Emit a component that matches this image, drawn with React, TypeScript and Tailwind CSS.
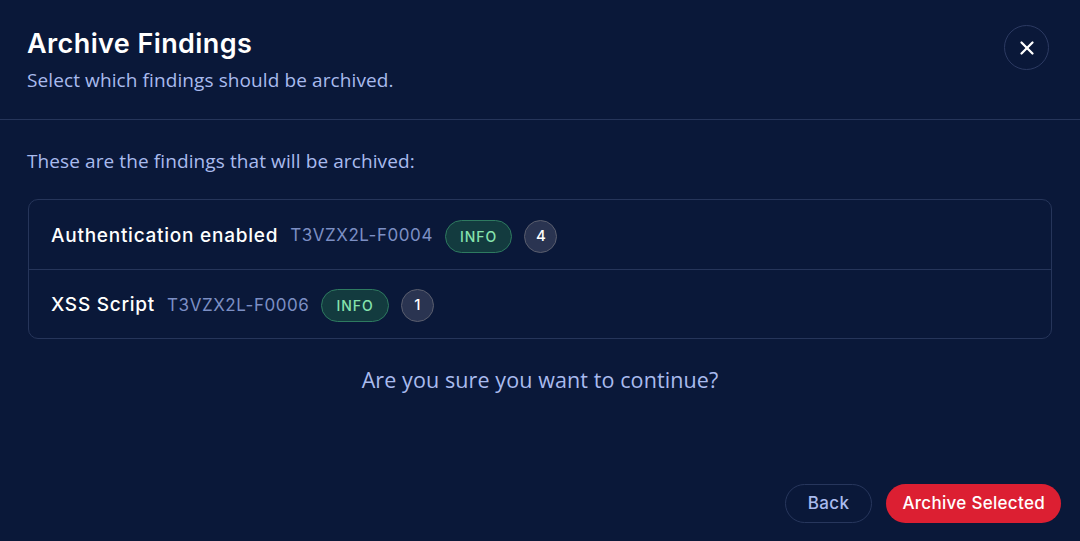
import { X } from 'lucide-react';

interface Finding {
  title: string;
  code: string;
  severity: string;
  count: number;
}

const findings: Finding[] = [
  { title: 'Authentication enabled', code: 'T3VZX2L-F0004', severity: 'INFO', count: 4 },
  { title: 'XSS Script', code: 'T3VZX2L-F0006', severity: 'INFO', count: 1 },
];

export default function App() {
  return (
    <div className="w-[1080px] h-[541px] bg-[#0a1839] flex flex-col font-['Open_Sans','Noto_Sans',sans-serif] overflow-hidden">
      {/* Header */}
      <div className="flex items-start justify-between px-[27px] pt-[26px] pb-[26px] border-b border-[#26355a]">
        <div>
          <h1 className="text-[27px] leading-[36px] font-semibold text-white font-['Inter',sans-serif] tracking-[0.4px]">
            Archive Findings
          </h1>
          <p className="mt-[5px] text-[19px] leading-[26px] text-[#a9bbee] tracking-[0.1px]">Select which findings should be archived.</p>
        </div>
        <button className="mt-[-1px] mr-[4px] w-[45px] h-[45px] rounded-full border border-[#2c3a62] flex items-center justify-center text-white">
          <X size={22} strokeWidth={2.5} />
        </button>
      </div>

      {/* Body */}
      <div className="flex-1 px-[27px] pt-[28px] flex flex-col">
        <p className="text-[19px] leading-[26px] text-[#a9bbee] tracking-[0.1px]">These are the findings that will be archived:</p>

        <div className="mt-[25px] mx-[1px] border border-[#26355a] rounded-[10px]">
          {findings.map((f, idx) => (
            <div
              key={idx}
              className={`h-[69px] px-[22px] pt-[3px] flex items-center gap-[12px] font-['Inter',sans-serif] ${idx > 0 ? 'border-t border-[#26355a]' : ''}`}
            >
              <span className="text-[19px] font-medium text-white tracking-[0.75px]">{f.title}</span>
              <span className="text-[17px] text-[#7c8fc4] tracking-[0.55px]">{f.code}</span>
              <span className="h-[33px] px-[14px] rounded-full bg-[#133b3f] border border-[#2e7a60] text-[#86e3ad] text-[14px] font-medium tracking-[1px] flex items-center">
                {f.severity}
              </span>
              <span className="w-[33px] h-[33px] rounded-full bg-[#2a3451] border border-[#5a5e6e] text-white text-[15px] font-medium flex items-center justify-center">
                {f.count}
              </span>
            </div>
          ))}
        </div>

        <p className="mt-[27px] text-center text-[21.5px] leading-[28px] text-[#a9bbee] tracking-[0.1px]">Are you sure you want to continue?</p>

        <div className="mt-auto mb-[18px] mr-[-8px] flex justify-end gap-[14px] font-['Inter',sans-serif]">
          <button className="h-[39px] px-[22px] rounded-full border border-[#27365c] text-[#a9bbee] text-[17px] font-medium tracking-[0.4px]">
            Back
          </button>
          <button className="h-[39px] px-[16px] rounded-full bg-[#dc1f32] text-white text-[17px] font-medium tracking-[0.3px]">
            Archive Selected
          </button>
        </div>
      </div>
    </div>
  );
}
